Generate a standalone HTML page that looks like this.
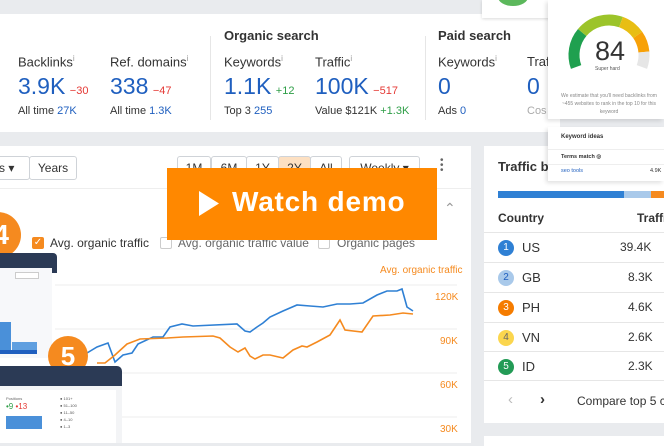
<!DOCTYPE html>
<html><head><meta charset="utf-8"><style>
*{margin:0;padding:0;box-sizing:border-box}
body{width:664px;height:443px;overflow:hidden;background:#e9ebee;font-family:"Liberation Sans",sans-serif;position:relative;color:#333}
.a{position:absolute;white-space:nowrap}
.card{position:absolute;background:#fff}
.lbl{font-size:13px;color:#333}
.big{font-size:23px;color:#1f5fbf}
.red{color:#e53935;font-size:11px}
.grn{color:#2e9e47;font-size:11px}
.sub{font-size:11px;color:#333}
.blu{color:#1f5fbf}
sup{font-size:8px;color:#999}
.btn{position:absolute;border:1px solid #cfd3d8;border-radius:3px;background:#fff;font-size:12px;color:#333;text-align:center;line-height:22px;height:24px}
.row{position:absolute;left:484px;width:180px;height:30px;border-top:1px solid #e6e6e6}
.dot{position:absolute;left:14px;top:7px;width:16px;height:16px;border-radius:50%;color:#fff;font-size:10px;text-align:center;line-height:16px}
</style></head><body>
<!-- stats card -->
<div class="card" style="left:0;top:14px;width:560px;height:118px"></div>
<div class="card" style="left:482px;top:0;width:70px;height:18px;box-shadow:0 1px 3px rgba(0,0,0,.15)"></div>
<div class="a" style="left:498px;top:-12px;width:30px;height:18px;border-radius:50%;background:#5cb85c"></div>
<div class="a" style="left:210px;top:36px;width:1px;height:84px;background:#e6e6e6"></div>
<div class="a" style="left:425px;top:36px;width:1px;height:84px;background:#e6e6e6"></div>
<div class="a" style="left:224px;top:28px;font-size:13px;font-weight:bold;color:#333">Organic search</div>
<div class="a" style="left:438px;top:28px;font-size:13px;font-weight:bold;color:#333">Paid search</div>

<div class="a lbl" style="left:18px;top:54px">Backlinks<sup>i</sup></div>
<div class="a lbl" style="left:110px;top:54px">Ref. domains<sup>i</sup></div>
<div class="a lbl" style="left:224px;top:54px">Keywords<sup>i</sup></div>
<div class="a lbl" style="left:315px;top:54px">Traffic<sup>i</sup></div>
<div class="a lbl" style="left:438px;top:54px">Keywords<sup>i</sup></div>
<div class="a lbl" style="left:527px;top:54px">Traf</div>

<div class="a" style="left:18px;top:73px"><span class="big">3.9K</span> <span class="red">−30</span></div>
<div class="a" style="left:110px;top:73px"><span class="big">338</span> <span class="red">−47</span></div>
<div class="a" style="left:224px;top:73px"><span class="big">1.1K</span> <span class="grn">+12</span></div>
<div class="a" style="left:315px;top:73px"><span class="big">100K</span> <span class="red">−517</span></div>
<div class="a" style="left:438px;top:73px"><span class="big">0</span></div>
<div class="a" style="left:527px;top:73px"><span class="big">0</span></div>

<div class="a sub" style="left:18px;top:105px">All time <span class="blu">27K</span></div>
<div class="a sub" style="left:110px;top:105px">All time <span class="blu">1.3K</span></div>
<div class="a sub" style="left:224px;top:105px">Top 3 <span class="blu">255</span></div>
<div class="a sub" style="left:315px;top:105px">Value $121K <span class="grn">+1.3K</span></div>
<div class="a sub" style="left:438px;top:105px">Ads <span class="blu">0</span></div>
<div class="a sub" style="left:527px;top:105px;color:#aaa">Cos</div>

<!-- chart card -->
<div class="card" style="left:0;top:146px;width:471px;height:297px"></div>
<div class="a" style="left:0;top:188px;width:471px;height:1px;background:#eee"></div>
<div class="btn" style="left:-6px;top:156px;width:36px;text-align:left;padding-left:4px">s ▾</div>
<div class="btn" style="left:29px;top:156px;width:48px">Years</div>
<div class="btn" style="left:177px;top:156px;width:34px">1M</div>
<div class="btn" style="left:211px;top:156px;width:36px">6M</div>
<div class="btn" style="left:246px;top:156px;width:33px">1Y</div>
<div class="btn" style="left:278px;top:156px;width:33px;background:#fde0c2">2Y</div>
<div class="btn" style="left:310px;top:156px;width:32px">All</div>
<div class="btn" style="left:349px;top:156px;width:71px">Weekly ▾</div>
<div class="a" style="left:440px;top:158px;color:#666;font-size:10px;line-height:5px">•<br>•<br>•</div>
<div class="a" style="left:444px;top:200px;color:#999;font-size:14px">⌃</div>

<div class="a" style="left:32px;top:237px;width:12px;height:12px;background:#f58a1f;border-radius:2px;color:#fff;font-size:10px;text-align:center;line-height:12px">✓</div>
<div class="a" style="left:50px;top:236px;font-size:12px;color:#333">Avg. organic traffic</div>
<div class="a" style="left:160px;top:237px;width:12px;height:12px;border:1px solid #ccc;border-radius:2px"></div>
<div class="a" style="left:178px;top:236px;font-size:12px;color:#666">Avg. organic traffic value</div>
<div class="a" style="left:318px;top:237px;width:12px;height:12px;border:1px solid #ccc;border-radius:2px"></div>
<div class="a" style="left:337px;top:236px;font-size:12px;color:#666">Organic pages</div>
<div class="a" style="left:380px;top:265px;font-size:10px;color:#f58a1f">Avg. organic traffic</div>
<div class="a" style="left:435px;top:292px;font-size:10px;color:#f58a1f">120K</div>
<div class="a" style="left:440px;top:336px;font-size:10px;color:#f58a1f">90K</div>
<div class="a" style="left:440px;top:380px;font-size:10px;color:#f58a1f">60K</div>
<div class="a" style="left:440px;top:424px;font-size:10px;color:#f58a1f">30K</div>

<svg class="a" style="left:0;top:0" width="664" height="443">
<g stroke="#eee" stroke-width="1"><line x1="55" y1="285" x2="457" y2="285"/><line x1="55" y1="329" x2="457" y2="329"/><line x1="55" y1="373" x2="457" y2="373"/><line x1="55" y1="417" x2="457" y2="417"/></g>
<polyline fill="none" stroke="#2f80d4" stroke-width="1.6" points="87,353 97,347 108,343 115,362 123,355 132,353 138,344 153,337 163,337 170,327 182,324 193,326 237,324 245,331 250,332 257,327 263,323 270,317 283,311 297,305 310,306 323,307 337,304 350,304 363,303 377,295 387,291 397,291 402,289 407,307 413,311"/>
<polyline fill="none" stroke="#f58a1f" stroke-width="1.6" points="97,363 105,363 115,355 127,344 140,339 167,338 183,337 213,336 220,338 230,347 238,352 245,348 250,356 255,359 263,355 270,355 283,358 293,350 302,346 307,347 317,342 330,335 340,320 345,330 362,332 373,316 390,315 403,313 413,314"/>
</svg>

<!-- overlays left -->
<div class="a" style="left:-25px;top:212px;width:46px;height:46px;border-radius:50%;background:#f58a1f;color:#fff;font-size:28px;font-weight:bold;line-height:46px;text-align:right;padding-right:12px">4</div>
<div class="a" style="left:0;top:253px;width:57px;height:20px;background:#2b3a55;border-radius:0 4px 0 0"></div>
<div class="a" style="left:0;top:260px;width:57px;height:12px;background:#2b3a55"></div>
<div class="card" style="left:0;top:268px;width:52px;height:90px;background:#f7f8fa"></div>
<div class="a" style="left:15px;top:272px;width:24px;height:7px;border:1px solid #ccc;font-size:4px;background:#fff"></div>
<div class="a" style="left:0;top:322px;width:11px;height:32px;background:#4a90d9"></div>
<div class="a" style="left:12px;top:342px;width:25px;height:12px;background:#5f9fe0"></div>
<div class="a" style="left:0;top:350px;width:37px;height:4px;background:#1f5fbf"></div>
<div class="a" style="left:48px;top:336px;width:40px;height:40px;border-radius:50%;background:#f58a1f;color:#fff;font-size:26px;font-weight:bold;line-height:40px;text-align:center">5</div>
<div class="a" style="left:0;top:366px;width:122px;height:20px;background:#2b3a55;border-radius:0 5px 0 0"></div>
<div class="card" style="left:0;top:386px;width:122px;height:57px;background:#f3f4f6"></div>
<div class="card" style="left:0;top:390px;width:116px;height:53px"></div>
<div class="a" style="left:6px;top:396px;font-size:4px;color:#666">Positions</div>
<div class="a" style="left:6px;top:402px;font-size:8px"><span style="color:#2e9e47">•9</span> <span style="color:#e53935">•13</span></div>
<div class="a" style="left:6px;top:416px;width:36px;height:13px;background:#4a90d9"></div>
<div class="a" style="left:60px;top:395px;font-size:4px;color:#555;line-height:7px">● 101+<br>● 51–100<br>● 11–50<br>● 4–10<br>● 1–3</div>

<!-- Watch demo -->
<div class="a" style="left:167px;top:168px;width:270px;height:72px;background:#ff8800"></div>
<svg class="a" style="left:199px;top:191px" width="20" height="25"><polygon points="0,0 20,12.5 0,25" fill="#fff"/></svg>
<div class="a" style="left:232px;top:186px;font-size:28px;font-weight:bold;color:#fff;letter-spacing:0.8px">Watch demo</div>

<!-- traffic card -->
<div class="card" style="left:484px;top:146px;width:180px;height:277px"></div>
<div class="card" style="left:484px;top:436px;width:180px;height:10px"></div>
<div class="a" style="left:498px;top:159px;font-size:13px;font-weight:bold;color:#333">Traffic by</div>
<div class="a" style="left:498px;top:191px;width:126px;height:7px;background:#2f80d4"></div>
<div class="a" style="left:624px;top:191px;width:27px;height:7px;background:#a9c9ea"></div>
<div class="a" style="left:651px;top:191px;width:13px;height:7px;background:#f58a1f"></div>
<div class="a" style="left:498px;top:211px;font-size:12px;font-weight:bold;color:#333">Country</div>
<div class="a" style="left:637px;top:211px;font-size:12px;font-weight:bold;color:#333">Traffic</div>
<div class="row" style="top:232px"><div class="dot" style="background:#2f80d4">1</div><span class="a" style="left:38px;top:7px;font-size:13px">US</span><span class="a" style="left:136px;top:7px;font-size:12px">39.4K</span></div>
<div class="row" style="top:262px"><div class="dot" style="background:#a9c9ea;color:#1f5fbf">2</div><span class="a" style="left:38px;top:7px;font-size:13px">GB</span><span class="a" style="left:144px;top:7px;font-size:12px">8.3K</span></div>
<div class="row" style="top:292px"><div class="dot" style="background:#f57c00">3</div><span class="a" style="left:38px;top:7px;font-size:13px">PH</span><span class="a" style="left:144px;top:7px;font-size:12px">4.6K</span></div>
<div class="row" style="top:322px"><div class="dot" style="background:#fbd64e;color:#666">4</div><span class="a" style="left:38px;top:7px;font-size:13px">VN</span><span class="a" style="left:144px;top:7px;font-size:12px">2.6K</span></div>
<div class="row" style="top:351px"><div class="dot" style="background:#239b56">5</div><span class="a" style="left:38px;top:7px;font-size:13px">ID</span><span class="a" style="left:144px;top:7px;font-size:12px">2.3K</span></div>
<div class="row" style="top:380px;height:43px"><span class="a" style="left:24px;top:10px;font-size:15px;color:#bbb">‹</span><span class="a" style="left:56px;top:10px;font-size:15px;color:#333;font-weight:bold">›</span><span class="a" style="left:93px;top:13px;font-size:12px">Compare top 5 c</span></div>

<!-- floating keyword panel -->
<div class="card" style="left:548px;top:0;width:116px;height:119px;box-shadow:-2px 2px 4px rgba(0,0,0,.12)"></div>
<svg class="a" style="left:0;top:0" width="664" height="120">
<g fill="none" stroke-width="11">
<path d="M576.1,67 A35,35 0 0 1 582.2,32.5" stroke="#1fa04f"/>
<path d="M582.2,32.5 A35,35 0 0 1 621,22.1" stroke="#9cc42a"/>
<path d="M621,22.1 A35,35 0 0 1 637.7,34.9" stroke="#e8be14"/>
<path d="M637.7,34.9 A35,35 0 0 1 643.9,52" stroke="#f7a108"/>
<path d="M643.9,52 A35,35 0 0 1 641.9,67" stroke="#e6e6e6"/>
</g></svg>
<div class="a" style="left:595px;top:36px;font-size:27px;color:#333">84</div>
<div class="a" style="left:595px;top:66px;font-size:5px;color:#555">Super hard</div>
<div class="a" style="left:559px;top:92px;font-size:5px;color:#888;text-align:center;line-height:8px;width:100px;white-space:normal">We estimate that you'll need backlinks from ~455 websites to rank in the top 10 for this keyword</div>
<div class="card" style="left:548px;top:127px;width:116px;height:54px;box-shadow:-2px 2px 4px rgba(0,0,0,.12)"></div>
<div class="a" style="left:561px;top:134px;font-size:6px;font-weight:bold;color:#333">Keyword ideas</div>
<div class="a" style="left:548px;top:149px;width:116px;height:1px;background:#eee"></div>
<div class="a" style="left:561px;top:154px;font-size:5.5px;font-weight:bold;color:#333">Terms match ◎</div>
<div class="a" style="left:548px;top:164px;width:116px;height:1px;background:#eee"></div>
<div class="a" style="left:561px;top:168px;font-size:5.5px;color:#1f5fbf">seo tools</div>
<div class="a" style="left:650px;top:168px;font-size:5.5px;color:#333">4.9K</div>
</body></html>
